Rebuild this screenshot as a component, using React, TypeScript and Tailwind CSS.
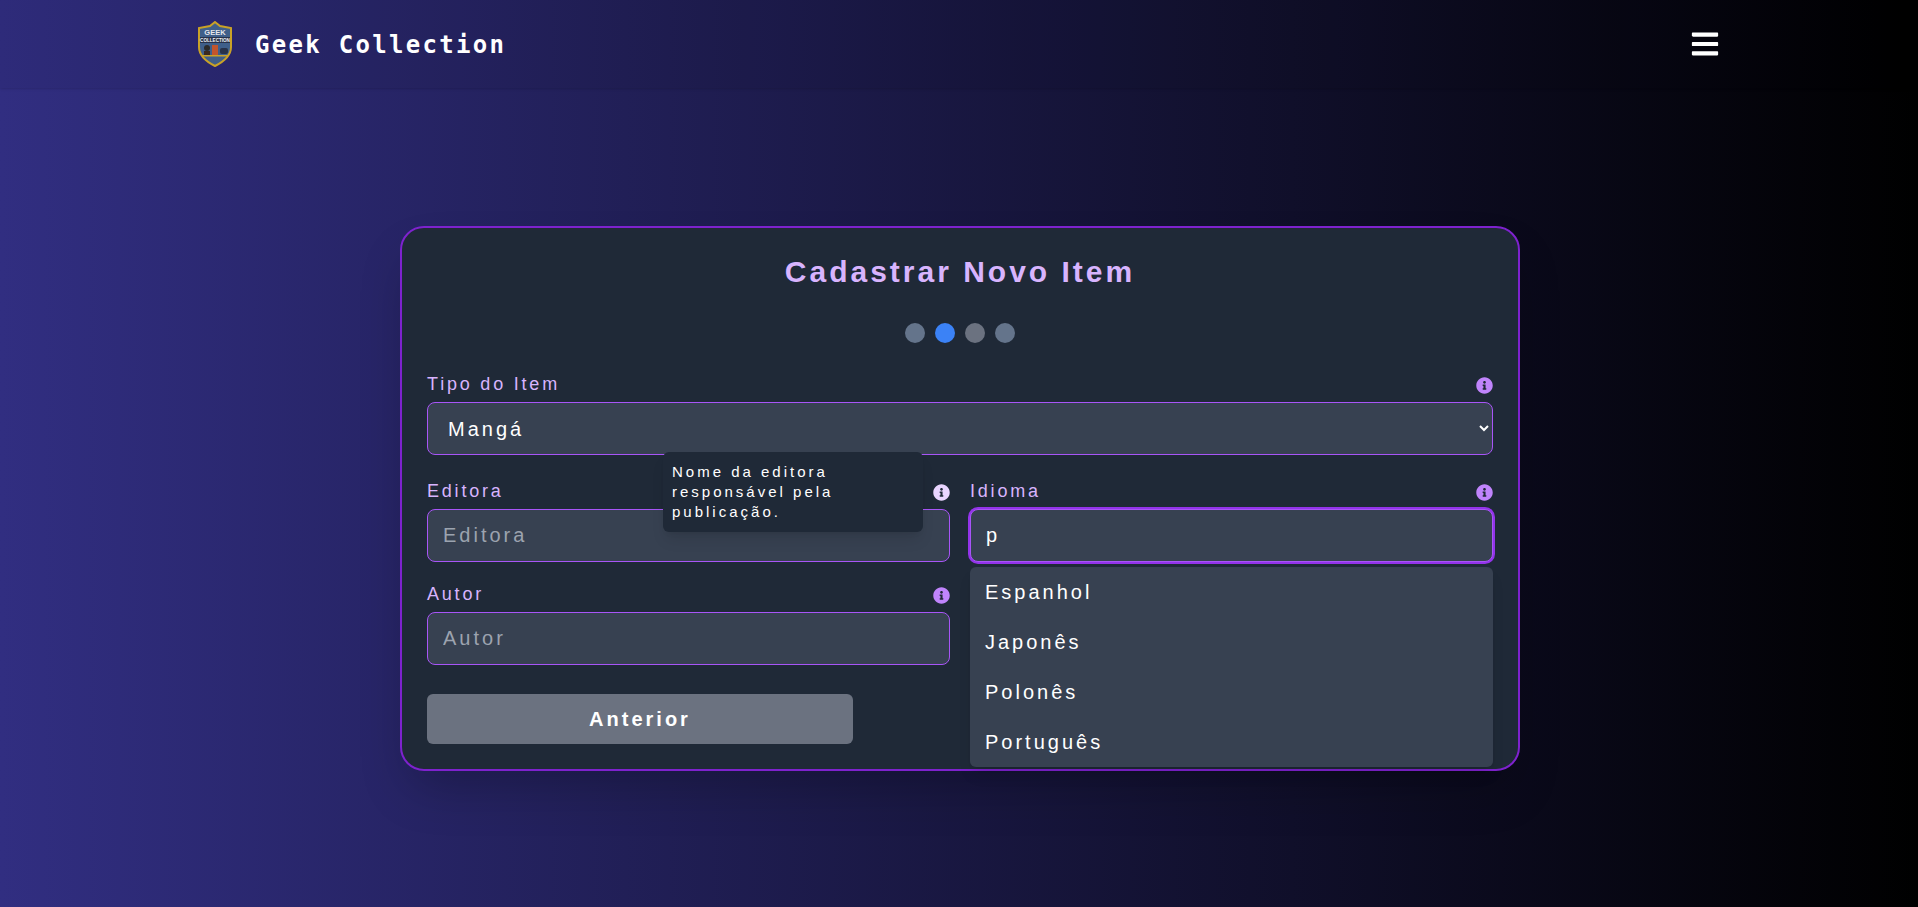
import React from "react";
import { FaBars, FaInfoCircle } from "react-icons/fa";

const IDIOMAS = ["Espanhol", "Japonês", "Polonês", "Português"];

// Escudo do logo
const Logo: React.FC = () => (
  <svg width="36" height="46" viewBox="0 0 36 46" className="shrink-0">
    <path d="M18 1 L23 5 L34 7 L34 26 C34 35 26 41 18 45 C10 41 2 35 2 26 L2 7 L13 5 Z" fill="#3f5f8a" stroke="#c9a227" strokeWidth="2" />
    <text x="18" y="14" textAnchor="middle" fontSize="7.5" fontWeight="700" fill="#e5e7eb" fontFamily="Liberation Sans, sans-serif">GEEK</text>
    <rect x="3" y="16" width="30" height="6" fill="#27324a" />
    <text x="18" y="21" textAnchor="middle" fontSize="4.6" fontWeight="700" fill="#f3f4f6" fontFamily="Liberation Sans, sans-serif">COLLECTION</text>
    <circle cx="10" cy="27" r="3" fill="#2b2b2b" />
    <rect x="7" y="30" width="6" height="4" fill="#3a2a20" />
    <rect x="15" y="24" width="6" height="10" fill="#c2552d" />
    <rect x="23" y="27" width="8" height="6" rx="2" fill="#27324a" />
    <rect x="5" y="34" width="26" height="1.5" fill="#c9a227" />
  </svg>
);

const FieldLabel: React.FC<{ label: string; active?: boolean; children?: React.ReactNode }> = ({ label, active, children }) => (
  <div className="relative flex items-center justify-between h-6 mb-[6px]">
    <label className="text-lg tracking-[2.8px] text-[#d8b4fe]">{label}</label>
    <FaInfoCircle size={17} className={"mt-[2px] " + (active ? "text-[#e9d5ff]" : "text-[#c084fc]")} />
    {children}
  </div>
);

const inputClass =
  "w-full h-[53px] px-[15px] rounded-lg border border-[#a855f7] bg-[#374151] text-xl tracking-[3px] text-white placeholder:text-[#9ca3af] outline-none";

export default function App() {
  return (
    <div className="min-h-screen flex flex-col bg-linear-to-r/srgb from-[#312e81] to-black font-['Liberation_Sans',Arial,sans-serif]">
      {/* Barra superior */}
      <header className="h-[88px] shrink-0 shadow-sm bg-black/5">
        <div className="mx-auto w-full max-w-[1536px] h-full pl-[6px] pr-[7px] flex items-center justify-between">
          <div className="flex items-center gap-[22px]">
            <Logo />
            <span className="pt-0.5 text-2xl font-bold tracking-[2.3px] text-white font-['DejaVu_Sans_Mono',monospace]">Geek Collection</span>
          </div>
          <FaBars size={30} className="text-white" />
        </div>
      </header>

      <main className="flex-1 flex items-center justify-center pl-0.5 pt-0.5">
        <div className="w-[1120px] rounded-3xl border-2 border-[#7e22ce] bg-[#1f2937] px-[25px] pt-[26px] pb-[25px] shadow-2xl">
          <h1 className="text-3xl font-bold tracking-[3px] text-center text-[#d8b4fe]">Cadastrar Novo Item</h1>

          <div className="flex justify-center gap-2.5 mt-[33px] mb-[29px]">
            <span className="w-5 h-5 rounded-full bg-[#64748b]" />
            <span className="w-5 h-5 rounded-full bg-[#3b82f6]" />
            <span className="w-5 h-5 rounded-full bg-[#6b7280]" />
            <span className="w-5 h-5 rounded-full bg-[#64748b]" />
          </div>

          <div className="mb-6">
            <FieldLabel label="Tipo do Item" />
            <select className={inputClass + " pl-4 text-lg"} defaultValue="Mangá">
              <option>Mangá</option>
            </select>
          </div>

          <div className="grid grid-cols-2 gap-x-5">
            <div className="flex flex-col gap-5">
              <div>
                <FieldLabel label="Editora" active>
                  <div className="absolute right-[27px] -top-[27px] z-20 w-[260px] rounded-md bg-[#1f2937] px-[9px] py-2.5 text-[15px] leading-5 tracking-[3px] text-white shadow-lg">
                    Nome da editora responsável pela publicação.
                  </div>
                </FieldLabel>
                <input className={inputClass} placeholder="Editora" />
              </div>
              <div>
                <FieldLabel label="Autor" />
                <input className={inputClass} placeholder="Autor" />
              </div>
              <button className="mt-[9px] w-2/5 min-w-[426px] h-[50px] rounded-md bg-[#6b7280] text-xl font-bold tracking-[3px] text-white">
                Anterior
              </button>
            </div>

            <div className="relative">
              <FieldLabel label="Idioma" />
              <input
                className="w-full h-[53px] px-[15px] rounded-lg border border-[#a855f7] ring-2 ring-[#9333ea] bg-[#374151] text-xl tracking-[3px] text-white outline-none"
                defaultValue="p"
              />
              <ul className="absolute z-10 left-0 right-0 top-[88px] rounded-md bg-[#374151] shadow-lg">
                {IDIOMAS.map((idioma) => (
                  <li key={idioma} className="h-[50px] px-[15px] flex items-center text-xl tracking-[3px] text-white">
                    {idioma}
                  </li>
                ))}
              </ul>
            </div>
          </div>
        </div>
      </main>
    </div>
  );
}
